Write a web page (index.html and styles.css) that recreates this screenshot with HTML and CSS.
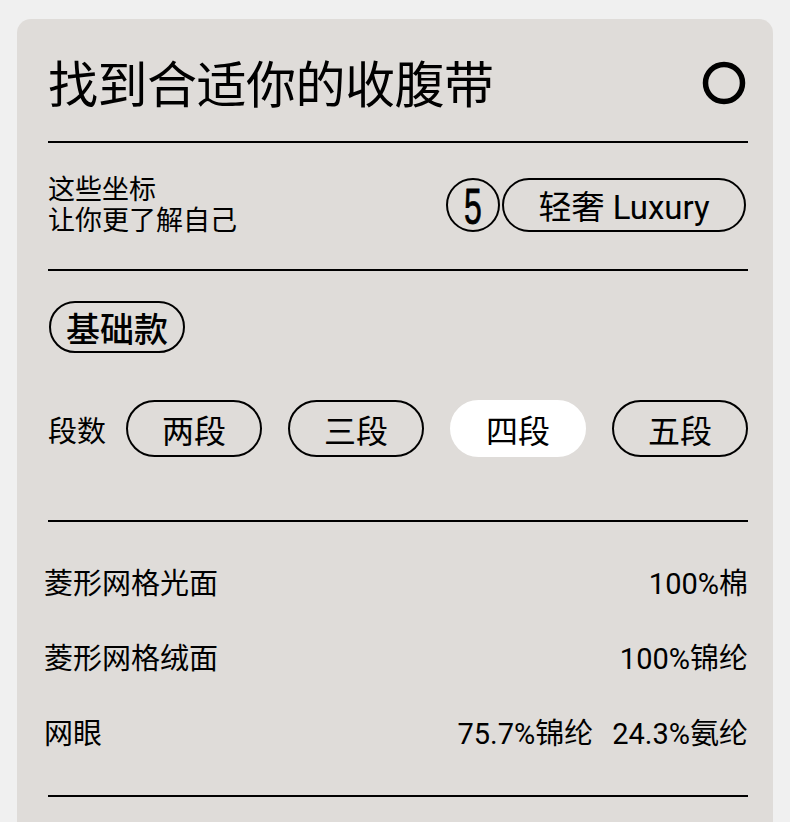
FILE: index.html
```html
<!DOCTYPE html>
<html lang="zh-CN">
<head>
<meta charset="utf-8">
<title>找到合适你的收腹带</title>
<link rel="stylesheet" href="styles.css">
</head>
<body>
<div class="card">
  <div class="header">
    <h1 class="title">找到合适你的收腹带</h1>
    <svg class="ring" width="44" height="44" viewBox="0 0 44 44"><circle cx="22" cy="22" r="18.5" fill="none" stroke="#000" stroke-width="5.5"/></svg>
  </div>
  <div class="rule"></div>
  <div class="intro">
    <div class="intro-text">
      <div class="intro-line">这些坐标</div>
      <div class="intro-line">让你更了解自己</div>
    </div>
    <div class="level">
      <div class="num-circle"><span class="num">5</span></div>
      <div class="pill pill-lux">轻奢 Luxury</div>
    </div>
  </div>
  <div class="rule"></div>
  <div class="options">
    <div class="pill pill-basic">基础款</div>
    <div class="seg-row">
      <span class="seg-label">段数</span>
      <div class="seg">两段</div>
      <div class="seg">三段</div>
      <div class="seg seg-active">四段</div>
      <div class="seg">五段</div>
    </div>
  </div>
  <div class="rule"></div>
  <div class="specs">
    <div class="spec"><span>菱形网格光面</span><span>100%棉</span></div>
    <div class="spec"><span>菱形网格绒面</span><span>100%锦纶</span></div>
    <div class="spec"><span>网眼</span><span class="values"><span>75.7%锦纶</span><span>24.3%氨纶</span></span></div>
  </div>
  <div class="rule"></div>
  <div class="tail"></div>
</div>
</body>
</html>
```
FILE: styles.css
```css
* { box-sizing: border-box; }
html, body { margin: 0; padding: 0; }
body {
  background: #f0f0f0;
  padding: 19px 17px 0 17px;
  font-family: Roboto, "Noto Sans CJK SC", "Noto Sans", sans-serif;
  color: #000;
  height: 822px;
  overflow: hidden;
}
.card {
  background: #dfdcd9;
  border-radius: 14px 14px 0 0;
  padding: 0 25px 0 31px;
  height: 900px;
}
.header {
  height: 122px;
  display: flex;
  align-items: center;
  justify-content: space-between;
  padding-top: 4px;
}
.title {
  margin: 8px 0 0 0;
  font-size: 50px;
  font-weight: 400;
  line-height: 60px;
  letter-spacing: -0.5px;
}
.ring { margin-right: 2px; margin-top: 2px; }
.rule {
  height: 2px;
  background: #000;
}
.intro {
  height: 126px;
  display: flex;
  align-items: center;
  justify-content: space-between;
  padding-bottom: 4px;
}
.intro-text {
  font-size: 27px;
  line-height: 31px;
  margin-top: 3px;
}
.intro-line {
  height: 31px;
}
.level {
  display: flex;
  align-items: center;
  gap: 2px;
  margin-right: 2px;
  margin-top: 2px;
}
.num-circle {
  width: 54px;
  height: 54px;
  border: 2px solid #000;
  border-radius: 50%;
  display: flex;
  align-items: center;
  justify-content: center;
}
.num {
  font-family: "Liberation Sans", sans-serif;
  font-size: 50px;
  line-height: 1;
  display: inline-block;
  transform: scaleX(0.64);
  margin-top: 3px;
  -webkit-text-stroke: 0.8px #000;
}
.pill {
  border: 2px solid #000;
  border-radius: 999px;
  display: flex;
  align-items: center;
  justify-content: center;
}
.pill-lux {
  height: 54px;
  width: 244px;
  font-size: 33px;
}
.options {
  padding: 30px 0 63px 0;
}
.pill-basic {
  width: 136px;
  height: 52px;
  font-size: 34px;
  font-weight: 500;
  margin-left: 1px;
}
.seg-row {
  display: flex;
  align-items: center;
  margin-top: 47px;
  gap: 26px;
}
.seg-label {
  font-size: 29px;
  margin-right: -6px;
}
.seg {
  width: 136px;
  height: 57px;
  border: 2px solid #000;
  border-radius: 999px;
  display: flex;
  align-items: center;
  justify-content: center;
  font-size: 32px;
}
.seg-active {
  background: #fff;
  border-color: #fff;
}
.specs {
  padding: 21px 0 27px 0;
  margin-left: -4px;
}
.spec {
  height: 75px;
  display: flex;
  align-items: center;
  justify-content: space-between;
  font-size: 29px;
}
.values {
  display: flex;
  gap: 19px;
}
```
